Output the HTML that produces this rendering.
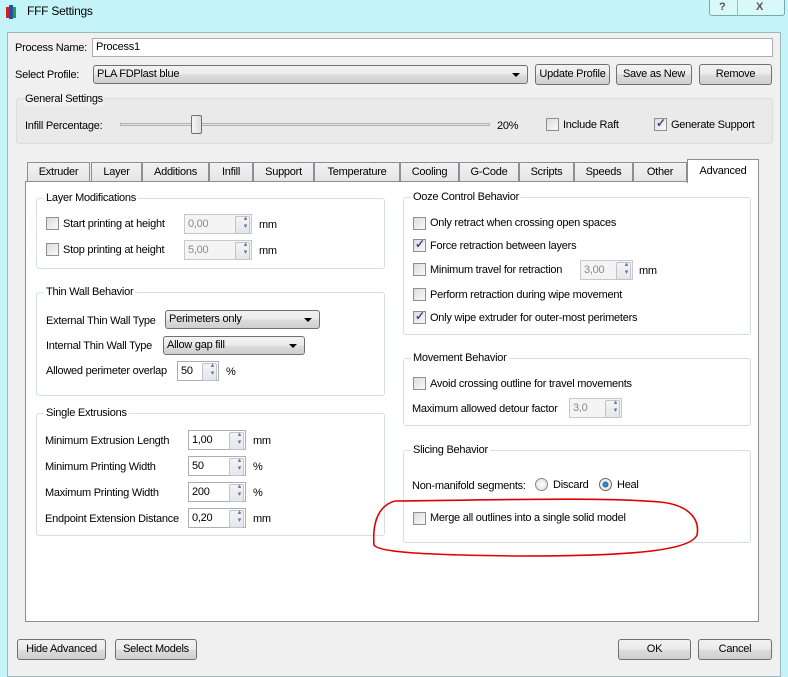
<!DOCTYPE html>
<html><head><meta charset="utf-8">
<style>
*{box-sizing:border-box;margin:0;padding:0}
body{width:788px;height:671px;overflow:hidden;background:#c4f4f8;font-family:"Liberation Sans",sans-serif;font-size:11px;letter-spacing:-0.25px;color:#000;position:relative}
.a{position:absolute;white-space:nowrap}
.t{position:absolute;white-space:nowrap;line-height:14px}
.btn{position:absolute;border:1px solid #707070;border-radius:3px;background:linear-gradient(#f2f2f2,#ebebeb 50%,#dddddd 50%,#cfcfcf);text-align:center;line-height:19px;white-space:nowrap}
.inp{position:absolute;border:1px solid #abadb3;background:#fff;padding-left:3px;line-height:17px}
.combo{position:absolute;border:1px solid #707070;border-radius:3px;background:linear-gradient(#f2f2f2,#ebebeb 50%,#dddddd 50%,#cfcfcf);padding-left:3px;line-height:17px}
.combo:after{content:"";position:absolute;right:7px;top:7px;border-left:4px solid transparent;border-right:4px solid transparent;border-top:4px solid #000}
.cb{position:absolute;width:13px;height:13px;border:1px solid #8e8f8f;background:linear-gradient(135deg,#dcdcdc,#fafafa)}
.cb.on:after{content:"✓";position:absolute;left:1px;top:-3px;font-size:12px;color:#3a4a8a;font-weight:bold}
.grp{position:absolute;border:1px solid #d5dfe5;border-radius:3px}
.gt{position:absolute;top:-8px;left:7px;background:#fff;padding:0 2px;line-height:14px}
.spin{position:absolute;border:1px solid #abadb3;background:#fff;padding-left:3px;line-height:18px;height:20px}
.spin.dis{background:#f4f4f4;color:#8a8a8a;border-color:#c8c8c8}
.spin:after{content:"";position:absolute;right:1px;top:1px;width:13px;height:16px;border:1px solid #c0c4cc;border-radius:2px;background:linear-gradient(#f4f4f4,#e4e6ea)}
.spin:before{content:"▴\A▾";white-space:pre;position:absolute;right:4px;top:0px;font-size:7px;line-height:8px;color:#6070a0;z-index:2}
.tab{position:absolute;top:162px;height:20px;border:1px solid #8c8e94;border-bottom:none;background:linear-gradient(#f2f2f2,#e4e4e4);text-align:center;line-height:19px}
</style></head><body>
<div class="a" style="left:6px;top:5px;width:10px;height:14px">
<div class="a" style="left:0;top:2px;width:3px;height:11px;background:#d02020"></div>
<div class="a" style="left:3px;top:0;width:4px;height:14px;background:#2050b0"></div>
<div class="a" style="left:7px;top:2px;width:3px;height:11px;background:#20a040"></div></div>
<div class="t" style="left:27px;top:4px;font-size:12px">FFF Settings</div>
<div class="a" style="left:709px;top:-2px;width:76px;height:18px;border:1px solid #7aa;border-radius:3px;background:#d8f8fa"></div>
<div class="a" style="left:737px;top:-2px;width:1px;height:18px;background:#9bb"></div>
<div class="t" style="left:719px;top:0;font-weight:bold;color:#555">?</div>
<div class="t" style="left:756px;top:0;font-weight:bold;color:#555">X</div>
<div class="a" style="left:7px;top:32px;width:774px;height:645px;background:#f0f0f0;border:1px solid #9bb"></div>
<div class="t" style="left:15px;top:41px">Process Name:</div>
<div class="inp" style="left:92px;top:38px;width:681px;height:19px">Process1</div>
<div class="t" style="left:15px;top:68px">Select Profile:</div>
<div class="combo" style="left:93px;top:65px;width:435px;height:19px">PLA FDPlast blue</div>
<div class="btn" style="left:535px;top:64px;width:75px;height:21px">Update Profile</div>
<div class="btn" style="left:616px;top:64px;width:76px;height:21px">Save as New</div>
<div class="btn" style="left:699px;top:64px;width:73px;height:21px">Remove</div>
<div class="a" style="left:16px;top:98px;width:757px;height:46px;border:1px solid #dcdcdc;border-radius:3px;background:#eaeaea"></div>
<div class="t" style="left:24px;top:92px;background:#f0f0f0;padding:0 1px">General Settings</div>
<div class="t" style="left:25px;top:119px">Infill Percentage:</div>
<div class="a" style="left:120px;top:123px;width:370px;height:3px;border:1px solid #b0b0b0;background:#e6e6e6"></div>
<div class="a" style="left:191px;top:115px;width:11px;height:19px;border:1px solid #707070;border-radius:2px;background:linear-gradient(90deg,#f6f6f6,#dcdcdc)"></div>
<div class="t" style="left:497px;top:119px">20%</div>
<div class="cb" style="left:546px;top:118px"></div>
<div class="t" style="left:563px;top:118px">Include Raft</div>
<div class="cb on" style="left:654px;top:118px"></div>
<div class="t" style="left:671px;top:118px">Generate Support</div>
<div class="tab" style="left:27px;width:63px">Extruder</div>
<div class="tab" style="left:91px;width:51px">Layer</div>
<div class="tab" style="left:142px;width:67px">Additions</div>
<div class="tab" style="left:209px;width:44px">Infill</div>
<div class="tab" style="left:253px;width:61px">Support</div>
<div class="tab" style="left:314px;width:86px">Temperature</div>
<div class="tab" style="left:400px;width:59px">Cooling</div>
<div class="tab" style="left:459px;width:60px">G-Code</div>
<div class="tab" style="left:519px;width:55px">Scripts</div>
<div class="tab" style="left:574px;width:59px">Speeds</div>
<div class="tab" style="left:633px;width:54px">Other</div>
<div class="a" style="left:25px;top:181px;width:734px;height:441px;border:1px solid #8c8e94;background:#fff"></div>
<div class="tab" style="left:687px;top:159px;width:72px;height:24px;background:#fff;z-index:3;line-height:22px">Advanced</div>
<div class="grp" style="left:36px;top:198px;width:349px;height:71px"><div class="gt">Layer Modifications</div></div>
<div class="cb" style="left:46px;top:217px"></div><div class="t" style="left:63px;top:217px">Start printing at height</div>
<div class="spin dis" style="left:184px;top:214px;width:68px">0,00</div><div class="t" style="left:259px;top:218px">mm</div>
<div class="cb" style="left:46px;top:243px"></div><div class="t" style="left:63px;top:243px">Stop printing at height</div>
<div class="spin dis" style="left:184px;top:240px;width:68px">5,00</div><div class="t" style="left:259px;top:244px">mm</div>
<div class="grp" style="left:36px;top:292px;width:349px;height:104px"><div class="gt">Thin Wall Behavior</div></div>
<div class="t" style="left:46px;top:314px">External Thin Wall Type</div>
<div class="combo" style="left:165px;top:310px;width:155px;height:19px">Perimeters only</div>
<div class="t" style="left:46px;top:339px">Internal Thin Wall Type</div>
<div class="combo" style="left:163px;top:336px;width:142px;height:19px">Allow gap fill</div>
<div class="t" style="left:46px;top:364px">Allowed perimeter overlap</div>
<div class="spin" style="left:177px;top:361px;width:42px">50</div><div class="t" style="left:226px;top:365px">%</div>
<div class="grp" style="left:36px;top:413px;width:349px;height:123px"><div class="gt">Single Extrusions</div></div>
<div class="t" style="left:45px;top:434px">Minimum Extrusion Length</div>
<div class="spin" style="left:188px;top:430px;width:58px">1,00</div><div class="t" style="left:253px;top:434px">mm</div>
<div class="t" style="left:45px;top:460px">Minimum Printing Width</div>
<div class="spin" style="left:188px;top:456px;width:58px">50</div><div class="t" style="left:253px;top:460px">%</div>
<div class="t" style="left:45px;top:486px">Maximum Printing Width</div>
<div class="spin" style="left:188px;top:482px;width:58px">200</div><div class="t" style="left:253px;top:486px">%</div>
<div class="t" style="left:45px;top:512px">Endpoint Extension Distance</div>
<div class="spin" style="left:188px;top:508px;width:58px">0,20</div><div class="t" style="left:253px;top:512px">mm</div>
<div class="grp" style="left:403px;top:197px;width:348px;height:138px"><div class="gt">Ooze Control Behavior</div></div>
<div class="cb" style="left:413px;top:217px"></div><div class="t" style="left:430px;top:216px">Only retract when crossing open spaces</div>
<div class="cb on" style="left:413px;top:239px"></div><div class="t" style="left:430px;top:239px">Force retraction between layers</div>
<div class="cb" style="left:413px;top:263px"></div><div class="t" style="left:430px;top:263px">Minimum travel for retraction</div>
<div class="spin dis" style="left:580px;top:260px;width:53px">3,00</div><div class="t" style="left:639px;top:264px">mm</div>
<div class="cb" style="left:413px;top:288px"></div><div class="t" style="left:430px;top:288px">Perform retraction during wipe movement</div>
<div class="cb on" style="left:413px;top:311px"></div><div class="t" style="left:430px;top:311px">Only wipe extruder for outer-most perimeters</div>
<div class="grp" style="left:403px;top:358px;width:348px;height:68px"><div class="gt">Movement Behavior</div></div>
<div class="cb" style="left:413px;top:377px"></div><div class="t" style="left:430px;top:377px">Avoid crossing outline for travel movements</div>
<div class="t" style="left:412px;top:402px">Maximum allowed detour factor</div>
<div class="spin dis" style="left:569px;top:398px;width:53px">3,0</div>
<div class="grp" style="left:403px;top:450px;width:348px;height:93px"><div class="gt">Slicing Behavior</div></div>
<div class="t" style="left:412px;top:479px">Non-manifold segments:</div>
<div class="a" style="left:535px;top:478px;width:13px;height:13px;border-radius:50%;border:1px solid #888;background:radial-gradient(#fff,#ddd)"></div>
<div class="t" style="left:553px;top:478px">Discard</div>
<div class="a" style="left:599px;top:478px;width:13px;height:13px;border-radius:50%;border:1px solid #666;background:radial-gradient(#3da6e0 0,#1a6aa8 35%,#e8e8e8 40%,#fff)"></div>
<div class="t" style="left:617px;top:478px">Heal</div>
<div class="cb" style="left:413px;top:512px"></div><div class="t" style="left:430px;top:511px">Merge all outlines into a single solid model</div>
<svg class="a" style="left:0;top:0" width="788" height="671"><path d="M395 501 C 380 505, 372 520, 374 545 C 378 552, 420 555, 520 556 C 620 556, 690 552, 697 535 C 700 520, 690 505, 660 502 C 600 497, 500 500, 395 501" fill="none" stroke="#e00000" stroke-width="1.6"/></svg>
<div class="btn" style="left:17px;top:639px;width:89px;height:21px">Hide Advanced</div>
<div class="btn" style="left:115px;top:639px;width:82px;height:21px">Select Models</div>
<div class="btn" style="left:618px;top:639px;width:73px;height:21px">OK</div>
<div class="btn" style="left:698px;top:639px;width:74px;height:21px">Cancel</div>
</body></html>
